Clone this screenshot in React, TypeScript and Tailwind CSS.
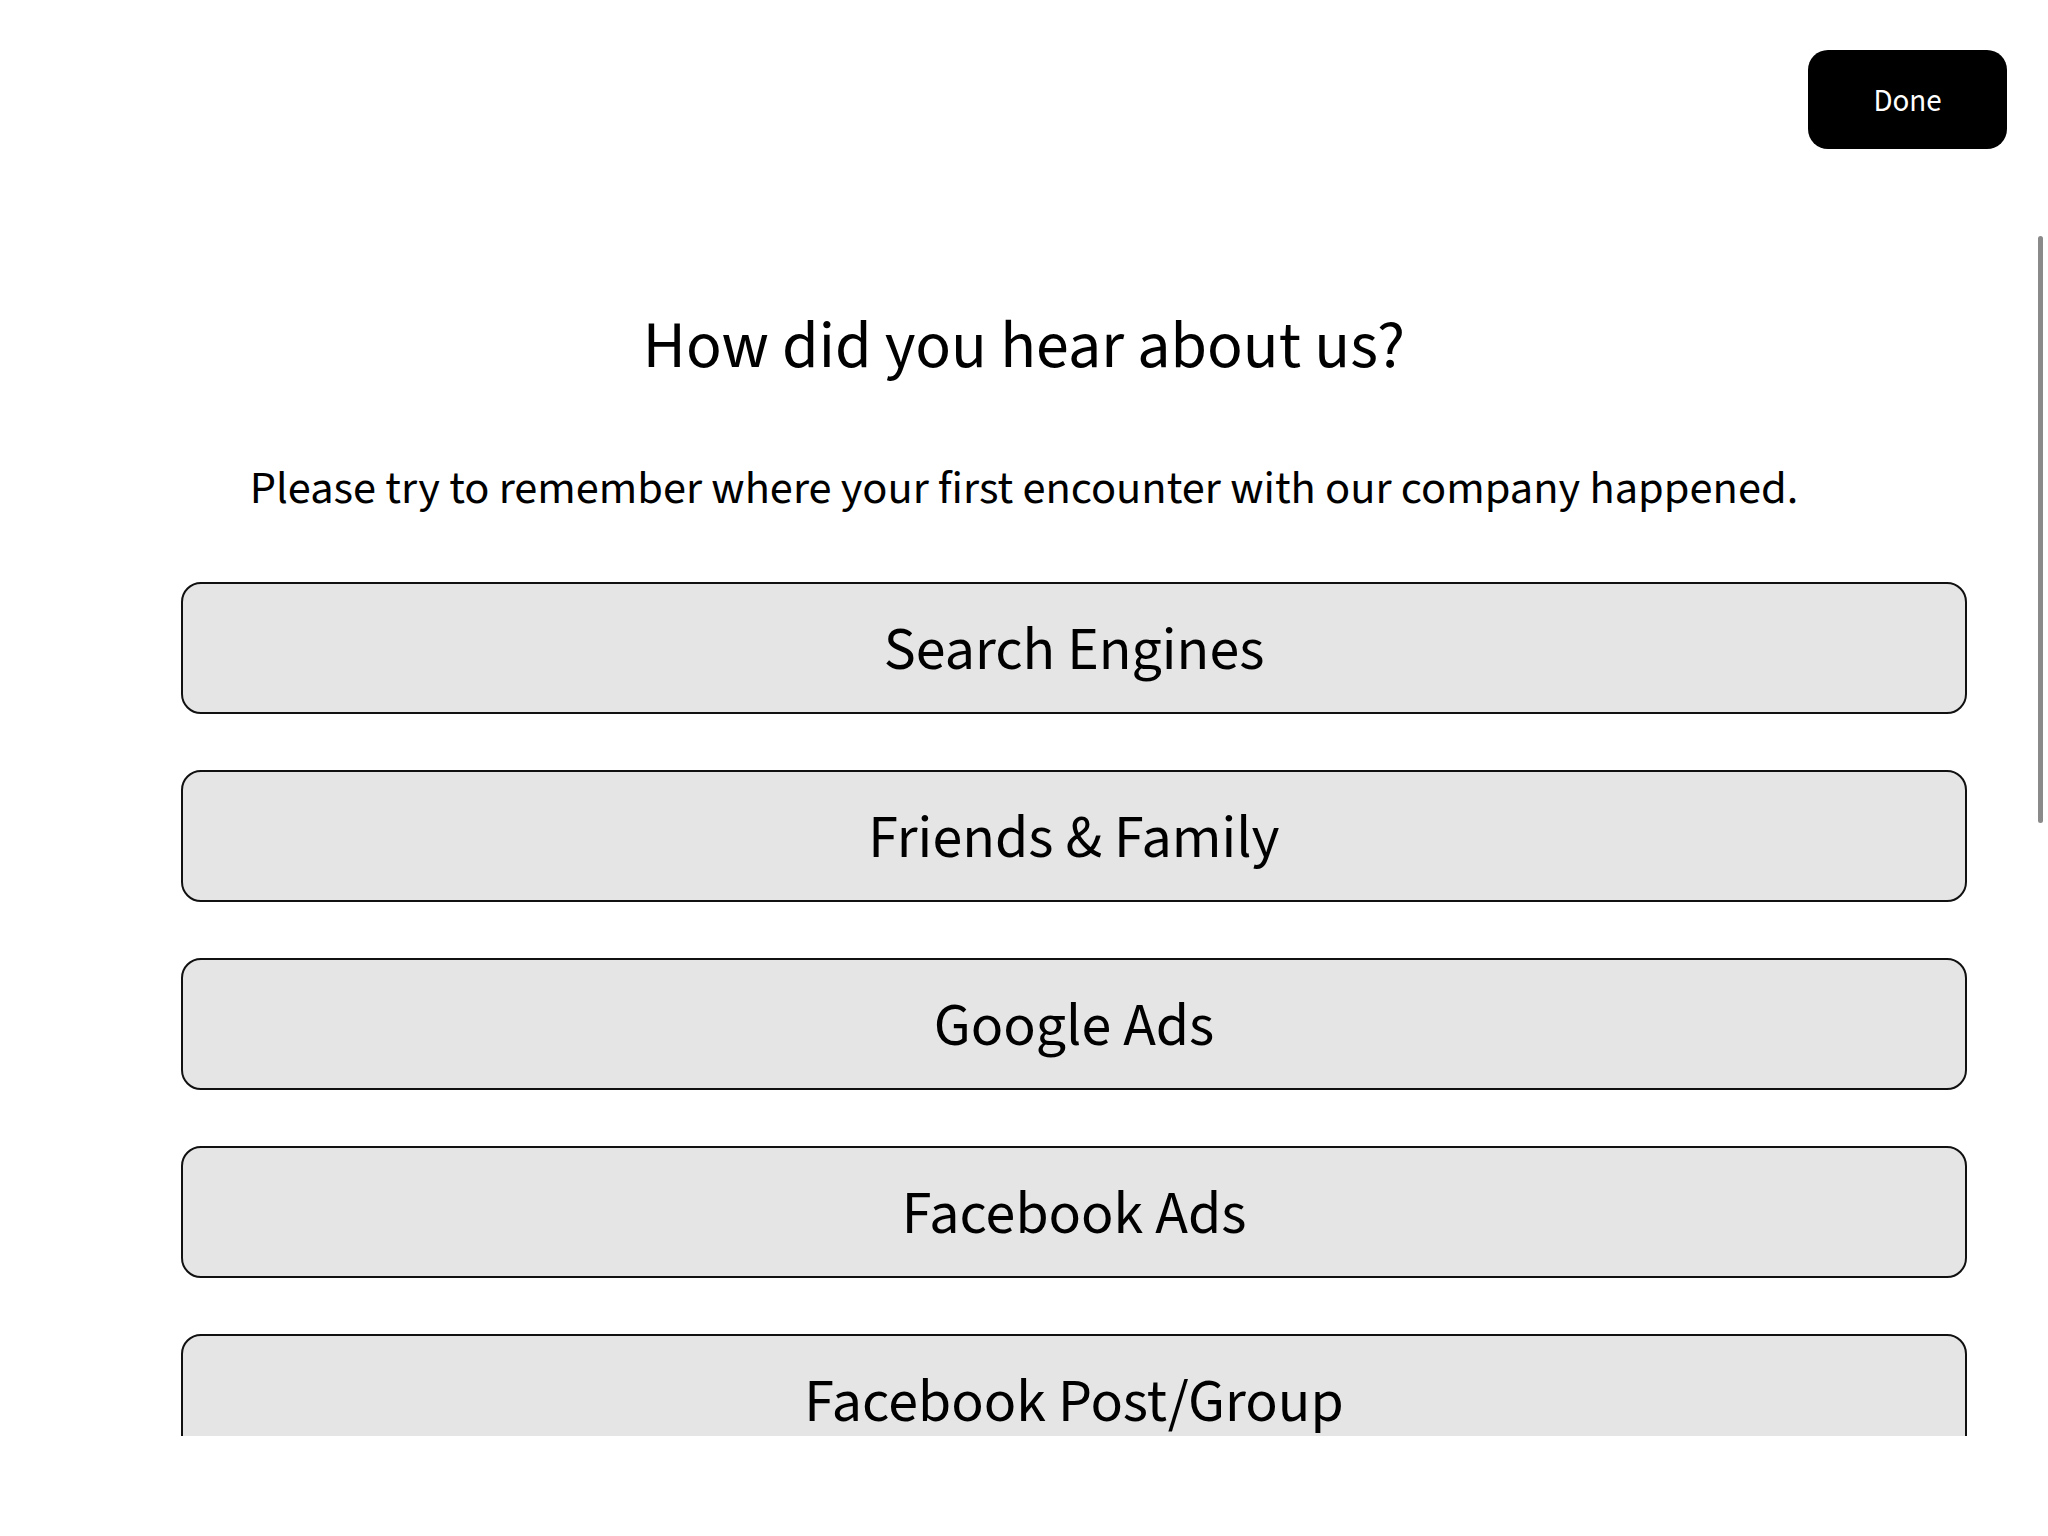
import React from 'react';

const sources = ['Search Engines', 'Friends & Family', 'Google Ads', 'Facebook Ads', 'Facebook Post/Group'];

const App = () => {
  return (
    <div className="h-[1536px] w-full bg-white text-black font-['Source_Sans_3','Lato',sans-serif] flex flex-col">
      <header className="h-[230px] flex justify-end items-start pt-[50px] pr-[41px]">
        <button className="w-[199px] h-[99px] rounded-[20px] bg-black text-white text-[31px] leading-none flex items-center justify-center pt-[4px]">
          Done
        </button>
      </header>

      <main className="relative h-[1206px] overflow-hidden">
        <div className="pt-[83px]">
          <h1 className="text-center text-[66px] leading-none">How did you hear about us?</h1>
          <p className="mt-[87px] text-center text-[46.4px] leading-none">
            Please try to remember where your first encounter with our company happened.
          </p>

          <div className="mt-[70px] ml-[181px] mr-[81px] flex flex-col gap-[56px]">
            {sources.map((item) => (
              <button
                key={item}
                className="h-[132px] w-full shrink-0 rounded-[20px] border-2 border-[#111] bg-[#e5e5e5] flex items-center justify-center pt-[5px] text-[60px] leading-none"
              >
                {item}
              </button>
            ))}
          </div>
        </div>

        {/* scroll indicator */}
        <div className="absolute right-[5px] top-[6px] w-[5px] h-[587px] rounded-full bg-[#8a8a8a]" />
      </main>
    </div>
  );
};

export default App;
